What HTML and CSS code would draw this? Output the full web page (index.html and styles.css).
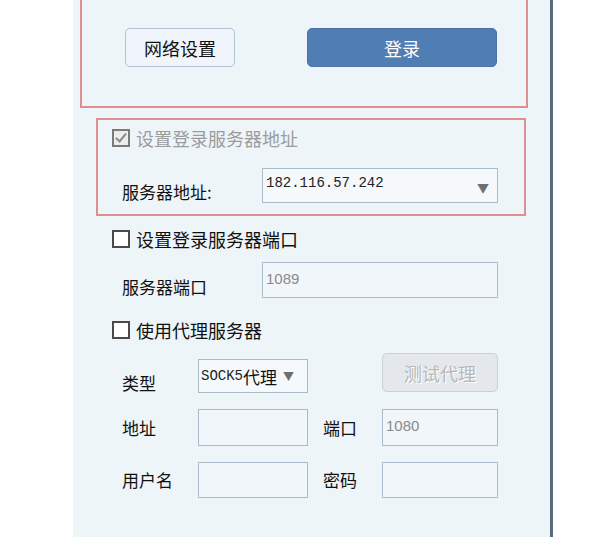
FILE: index.html
```html
<!DOCTYPE html>
<html lang="zh-CN">
<head>
    <meta charset="UTF-8">
    <meta name="viewport" content="width=device-width, initial-scale=1.0">
    <title>登录设置</title>
    <link rel="stylesheet" href="styles.css">
</head>
<body>
    <div class="panel">
        <div class="login-box">
            <button class="btn btn-net">网络设置</button>
            <button class="btn btn-login">登录</button>
        </div>

        <div class="server-box">
            <div class="check-row disabled">
                <span class="check checked"></span>
                <span>设置登录服务器地址</span>
            </div>
            <div class="field-row server-field">
                <span class="label">服务器地址:</span>
                <div class="combo">
                    <span class="combo-value">182.116.57.242</span>
                    <span class="arrow">▼</span>
                </div>
            </div>
        </div>

        <div class="check-row port-check">
            <span class="check"></span>
            <span>设置登录服务器端口</span>
        </div>
        <div class="field-row port-field">
            <span class="label">服务器端口</span>
            <div class="textbox wide"><span class="hint">1089</span></div>
        </div>

        <div class="check-row proxy-check">
            <span class="check"></span>
            <span>使用代理服务器</span>
        </div>

        <div class="proxy-grid">
            <span class="label type-label">类型</span>
            <div class="select">
                <span class="mono">SOCK5</span><span>代理</span>
                <span class="arrow small">▼</span>
            </div>
            <span></span>
            <button class="btn btn-test" disabled>测试代理</button>

            <span class="label">地址</span>
            <div class="textbox"></div>
            <span class="label second">端口</span>
            <div class="textbox"><span class="hint">1080</span></div>

            <span class="label">用户名</span>
            <div class="textbox"></div>
            <span class="label second">密码</span>
            <div class="textbox"></div>
        </div>
    </div>
</body>
</html>
```

FILE: styles.css
```css
/* settings panel */
body {
    margin: 0;
    background-color: #fff;
    font-family: "Noto Sans CJK SC", "Liberation Sans", sans-serif;
    color: #111;
}

.panel {
    margin-left: 73px;
    width: 477px;
    height: 537px;
    background-color: #eef5f9;
    border-right: 3px solid #5c6b7b;
    display: flex;
    flex-direction: column;
}

.login-box {
    margin-left: 7px;
    width: 448px;
    height: 108px;
    box-sizing: border-box;
    border: 2px solid #df8f91;
    border-top: none;
    display: flex;
    align-items: flex-start;
    padding-top: 28px;
}

.btn {
    font-family: inherit;
    font-size: 18px;
    height: 39px;
    border-radius: 5px;
    padding: 0;
    cursor: pointer;
}

.btn-net {
    margin-left: 43px;
    width: 110px;
    background-color: #f0f5fb;
    border: 1px solid #b3c3d6;
    color: #111;
}

.btn-login {
    margin-left: 72px;
    width: 190px;
    background-color: #4f7db4;
    border: 1px solid #4873a8;
    color: #fff;
}

.server-box {
    margin: 10px 0 0 23px;
    width: 430px;
    height: 98px;
    box-sizing: border-box;
    border: 2px solid #df8f91;
    padding: 9px 0 0 14px;
}

.check-row {
    display: flex;
    align-items: center;
    gap: 6px;
    font-size: 18px;
    height: 18px;
    line-height: 18px;
}

.check {
    width: 14px;
    height: 14px;
    border: 2px solid #4a4a4a;
    background-color: #fff;
    position: relative;
}

.check.checked {
    border-color: #7a7a7a;
    background-color: #ececec;
}

.check.checked::after {
    content: "";
    position: absolute;
    left: 4px;
    top: 0px;
    width: 4px;
    height: 9px;
    border: solid #8a8a8a;
    border-width: 0 2px 2px 0;
    transform: rotate(40deg);
}

.check-row.disabled {
    color: #9c9c9c;
}

.field-row {
    display: flex;
    align-items: flex-end;
}

.label {
    font-size: 17px;
    line-height: 20px;
}

.server-field {
    margin-top: 21px;
    padding-left: 10px;
}

.server-field .label,
.port-field .label {
    width: 140px;
    padding-bottom: 1px;
}

.combo {
    width: 236px;
    height: 35px;
    box-sizing: border-box;
    border: 1px solid #a9bac9;
    background-color: #f5f9fc;
    display: flex;
    align-items: flex-start;
    justify-content: space-between;
    padding: 6px 8px 0 3px;
}

.combo-value,
.mono {
    font-family: "Liberation Mono", monospace;
    font-size: 14px;
    color: #222;
}

.arrow {
    color: #6f6f6f;
    font-size: 12px;
    margin-top: 4px;
}

.arrow.small {
    font-size: 11px;
    margin: 0 0 0 6px;
}

.port-check {
    margin: 14px 0 0 39px;
}

.port-field {
    margin: 14px 0 0 49px;
}

.textbox {
    width: 110px;
    height: 36px;
    box-sizing: border-box;
    border: 1px solid #a9bac9;
    background-color: #f1f6fa;
    padding: 2px 0 0 3px;
}

.textbox.wide {
    width: 236px;
}

.hint {
    font-family: "Liberation Sans", sans-serif;
    font-size: 15px;
    color: #8a8a8a;
}

.proxy-check {
    margin: 23px 0 0 39px;
}

.proxy-grid {
    margin: 14px 0 0 49px;
    display: grid;
    grid-template-columns: 76px 110px 74px 116px;
    grid-template-rows: 40px 37px 36px;
    row-gap: 16px;
    align-items: center;
}

.proxy-grid .textbox {
    width: 100%;
    height: 100%;
}

.proxy-grid .label.second {
    padding-left: 15px;
}

.type-label {
    align-self: end;
}

.select {
    align-self: end;
    height: 34px;
    box-sizing: border-box;
    border: 1px solid #a9bac9;
    background-color: #f5f9fc;
    display: flex;
    align-items: center;
    padding-left: 2px;
    font-size: 17px;
}

.btn-test {
    align-self: start;
    width: 116px;
    background-color: #e4e8ec;
    border: 1px solid #c9d0d6;
    color: #b7b7b7;
    text-shadow: 1px 1px 0 #fff;
    cursor: not-allowed;
}
```
